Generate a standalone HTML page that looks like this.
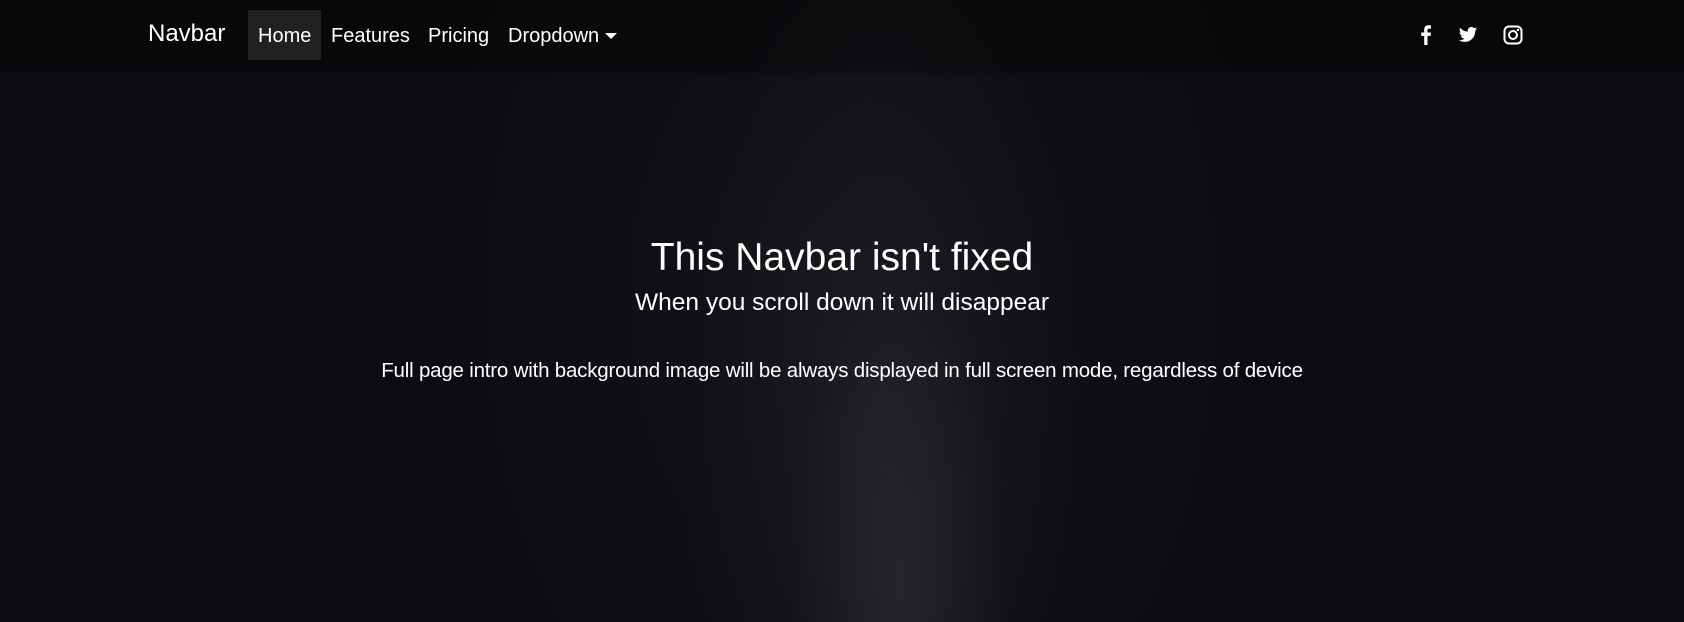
<!DOCTYPE html>
<html><head><meta charset="utf-8"><style>
html,body{margin:0;padding:0}
body{width:1684px;height:622px;overflow:hidden;position:relative;font-family:"Liberation Sans",sans-serif;color:#fff;
background:
radial-gradient(ellipse 110px 330px at 900px 590px, rgba(55,54,60,.45), rgba(55,54,60,0) 100%),
radial-gradient(ellipse 200px 480px at 880px 420px, rgba(38,37,43,.5), rgba(38,37,43,0) 100%),
radial-gradient(ellipse 450px 650px at 850px 300px, rgba(22,22,27,.6), rgba(22,22,27,0) 100%),
#0c0c10;}
.nav{position:absolute;left:0;top:0;width:1684px;height:71px;background:rgba(0,0,0,.3);box-shadow:0 2px 4px rgba(0,0,0,.2)}
.brand{position:absolute;left:148px;top:20px;font-size:24px;line-height:28px}
.home{position:absolute;left:248px;top:10px;width:73px;height:50px;background:rgba(255,255,255,.1)}
.link{position:absolute;top:24px;font-size:20px;line-height:24px;font-weight:300}
.ic{position:absolute;top:25px;width:20px;height:20px}
h1{position:absolute;left:0;width:1684px;text-align:center;top:234px;margin:0;font-weight:300;font-size:39px;line-height:48px}
h5{position:absolute;left:0;width:1684px;text-align:center;top:288px;margin:0;font-weight:300;font-size:24.5px;line-height:30px}
p{position:absolute;left:0;width:1684px;text-align:center;top:359px;margin:0;font-size:20.5px;line-height:24px;letter-spacing:-.2px}
</style></head><body>
<div class="nav">
<div class="brand">Navbar</div>
<div class="home"></div>
<div class="link" style="left:258px">Home</div>
<div class="link" style="left:331px">Features</div>
<div class="link" style="left:428px">Pricing</div>
<div class="link" style="left:508px">Dropdown</div>
<svg style="position:absolute;left:605px;top:33px" width="12" height="7" viewBox="0 0 12 7"><path d="M0 0h12L6 6z" fill="#fff"/></svg>
<svg class="ic" style="left:1416px" viewBox="0 0 20 20"><path d="M11.5 20v-9h3l.5-3.5h-3.5V5.3c0-1 .3-1.7 1.8-1.7H15V.5C14.6.4 13.6.3 12.4.3 9.9.3 8.2 1.8 8.2 4.6v2.9h-3V11h3v9z" fill="#fff"/></svg>
<svg class="ic" style="left:1458px" viewBox="0 0 24 24"><path d="M23 4.6c-.8.4-1.7.6-2.6.7.9-.6 1.6-1.4 2-2.5-.9.5-1.9.9-2.9 1.1a4.5 4.5 0 0 0-7.7 4.1C8 7.8 4.7 6 2.5 3.3a4.5 4.5 0 0 0 1.4 6c-.7 0-1.4-.2-2-.6 0 2.2 1.5 4 3.6 4.4-.7.2-1.4.2-2 .1.6 1.8 2.3 3.1 4.2 3.1A9 9 0 0 1 1 18.3c2 1.3 4.4 2 6.9 2 8.3 0 12.8-6.9 12.8-12.8v-.6c.9-.6 1.6-1.4 2.3-2.3z" fill="#fff"/></svg>
<svg class="ic" style="left:1503px" viewBox="0 0 20 20"><rect x="1.5" y="1.5" width="17" height="17" rx="4.5" fill="none" stroke="#fff" stroke-width="2"/><circle cx="10" cy="10" r="4" fill="none" stroke="#fff" stroke-width="2"/><circle cx="15" cy="5" r="1.2" fill="#fff"/></svg>
</div>
<h1>This Navbar isn't fixed</h1>
<h5>When you scroll down it will disappear</h5>
<p>Full page intro with background image will be always displayed in full screen mode, regardless of device</p>
</body></html>
